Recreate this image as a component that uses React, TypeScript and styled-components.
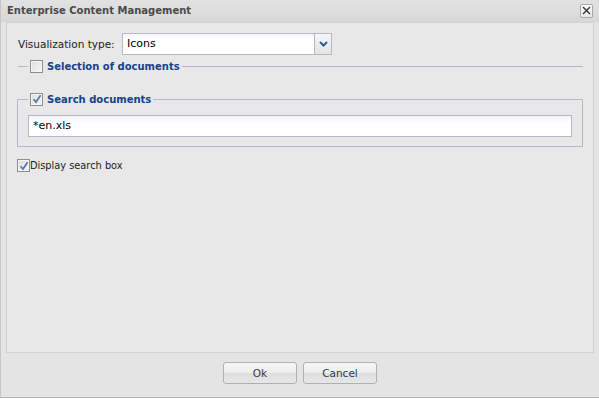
import styled, { createGlobalStyle } from "styled-components";

const GlobalStyle = createGlobalStyle`
    * { box-sizing: border-box; }
    html, body {
        margin: 0;
        padding: 0;
        background: #e4e4e4;
        font-family: "DejaVu Sans", "Liberation Sans", sans-serif;
    }
`

const CheckBox = (props: { checked?: boolean }) => (
    <Box>
        {props.checked && (
            <svg width="10" height="10" viewBox="0 0 10 10">
                <path d="M1.5 5.2 L4 8 L8.6 1.2" fill="none" stroke="#5a78a8" strokeWidth="1.7"/>
            </svg>
        )}
    </Box>
)

const App = () => {
    return (
        <Window>
            <GlobalStyle/>
            <TitleBar>
                <Title>Enterprise Content Management</Title>
                <CloseButton>
                    <svg width="9" height="9" viewBox="0 0 9 9">
                        <path d="M1 1 L8 8 M8 1 L1 8" stroke="#3c3c3c" strokeWidth="1.5"/>
                    </svg>
                </CloseButton>
            </TitleBar>

            <Panel>
                <FieldRow>
                    <FieldLabel>Visualization type:</FieldLabel>
                    <Combo>
                        <ComboText>Icons</ComboText>
                        <ComboTrigger>
                            <svg width="9" height="6" viewBox="0 0 9 6">
                                <path d="M1 1 L4.5 4.5 L8 1" fill="none" stroke="#2d5a9a" strokeWidth="2"/>
                            </svg>
                        </ComboTrigger>
                    </Combo>
                </FieldRow>

                <FieldSet $collapsed>
                    <Legend>
                        <CheckBox/>
                        <LegendText>Selection of documents</LegendText>
                    </Legend>
                </FieldSet>

                <FieldSet>
                    <Legend>
                        <CheckBox checked/>
                        <LegendText>Search documents</LegendText>
                    </Legend>
                    <TextInput>*en.xls</TextInput>
                </FieldSet>

                <CheckRow>
                    <CheckBox checked/>
                    <CheckLabel>Display search box</CheckLabel>
                </CheckRow>
            </Panel>

            <Footer>
                <Button>Ok</Button>
                <Button>Cancel</Button>
            </Footer>
        </Window>
    )
}

const Window = styled.div`
    width: 599px;
    height: 398px;
    display: flex;
    flex-direction: column;
    background: #e4e4e4;
    border-left: 1px solid #c6c6c6;
    border-bottom: 1px solid #b4b4b4;
    overflow: hidden;
`

const TitleBar = styled.div`
    height: 22px;
    flex-shrink: 0;
    display: flex;
    align-items: center;
    justify-content: space-between;
    padding: 0 6px 1px 6px;
    background: linear-gradient(#e2e2e2, #d8d8d8);
`

const Title = styled.div`
    font-size: 10px;
    font-weight: bold;
    color: #4a4a4a;
`

const CloseButton = styled.div`
    width: 13px;
    height: 14px;
    display: flex;
    align-items: center;
    justify-content: center;
    border: 1px solid #a8a8a8;
    border-radius: 2px;
    background: linear-gradient(#ffffff, #e8e8e8);
`

const Panel = styled.div`
    flex: 1;
    margin: 0 5px 0 5px;
    display: flex;
    flex-direction: column;
    padding: 10px 10px 0 11px;
    background: #e8e8e8;
    border: 1px solid #d2d2d2;
`

const FieldRow = styled.div`
    display: flex;
    align-items: center;
    height: 22px;
`

const FieldLabel = styled.div`
    width: 104px;
    font-size: 10.5px;
    color: #222;
`

const Combo = styled.div`
    width: 210px;
    height: 22px;
    display: flex;
    border: 1px solid #b5b8c8;
    background: linear-gradient(#f4f4f4, #ffffff 5px);
`

const ComboText = styled.div`
    flex: 1;
    padding: 0 4px;
    font-size: 11px;
    line-height: 20px;
    color: #000;
`

const ComboTrigger = styled.div`
    width: 17px;
    display: flex;
    align-items: center;
    justify-content: center;
    border-left: 1px solid #b5b8c8;
    background: linear-gradient(#f6f6f6, #e4e4e4);
`

const FieldSet = styled.fieldset<{ $collapsed?: boolean }>`
    margin: ${(props) => props.$collapsed ? "4px 0 0 0" : "19px 0 0 -1px"};
    padding: ${(props) => props.$collapsed ? "0 10px" : "9px 10px 9px 10px"};
    border: 1px solid #b5b8c8;
    ${(props) => props.$collapsed && "border-left: none; border-right: none; border-bottom: none;"}
    min-width: 0;
`

const Legend = styled.legend`
    display: flex;
    align-items: center;
    padding: 0 2px;
    height: 14px;
`

const LegendText = styled.span`
    margin-left: 4px;
    font-size: 10px;
    font-weight: bold;
    color: #15428b;
`

const Box = styled.div`
    width: 13px;
    height: 13px;
    flex-shrink: 0;
    display: flex;
    align-items: center;
    justify-content: center;
    border: 1px solid #8e8e8e;
    background: linear-gradient(135deg, #dcdcdc, #f8f8f8);
    box-shadow: inset 0 0 0 1px #f4f4f4;
`

const TextInput = styled.div`
    height: 22px;
    padding: 0 4px;
    font-size: 11px;
    line-height: 20px;
    color: #000;
    border: 1px solid #b5b8c8;
    background: linear-gradient(#f2f2f2, #ffffff 6px);
`

const CheckRow = styled.div`
    display: flex;
    align-items: center;
    margin: 12px 0 0 -1px;
`

const CheckLabel = styled.span`
    font-size: 9.8px;
    color: #222;
`

const Footer = styled.div`
    height: 44px;
    flex-shrink: 0;
    display: flex;
    justify-content: center;
    gap: 6px;
    padding-top: 9px;
`

const Button = styled.div`
    width: 74px;
    height: 22px;
    display: flex;
    align-items: center;
    justify-content: center;
    font-size: 10.5px;
    color: #2c3a50;
    border: 1px solid #b0b0b0;
    border-radius: 3px;
    background: linear-gradient(#f6f6f6, #eeeeee 50%, #dedede 50%, #e6e6e6);
`

export default App
